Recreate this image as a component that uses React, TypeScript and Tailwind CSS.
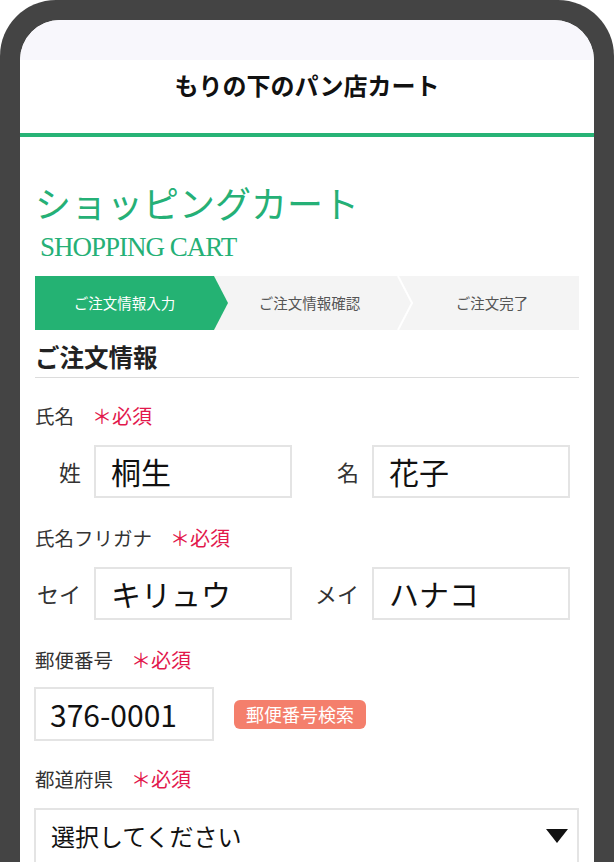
import React from "react";

const Required = () => (
  <span className="ml-[18px] text-[20px] text-[#e2184c]">＊必須</span>
);

const FieldLabel = ({ children }: { children: React.ReactNode }) => (
  <div className="flex h-[28px] items-center text-[19.5px] leading-[28px] text-[#333]">
    {children}
    <Required />
  </div>
);

const TextBox = ({ value }: { value: string }) => (
  <div className="flex h-[53px] items-center border-2 border-[#e4e4e4] pl-[15px] text-[30px] text-[#111]">
    {value}
  </div>
);

const NameRow = ({
  first,
  firstValue,
  second,
  secondValue,
}: {
  first: string;
  firstValue: string;
  second: string;
  secondValue: string;
}) => (
  <div className="mt-[15px] grid grid-cols-[59px_198px_80px_198px] items-center">
    <span className="pr-[13px] text-right text-[22px] text-[#333]">{first}</span>
    <TextBox value={firstValue} />
    <span className="pr-[13px] text-right text-[22px] text-[#333]">{second}</span>
    <TextBox value={secondValue} />
  </div>
);

export default function App() {
  return (
    <div className="h-[862px] w-[614px] overflow-hidden bg-white font-['Noto_Sans_CJK_JP','Noto_Sans',sans-serif]">
      {/* phone frame */}
      <div className="h-full rounded-t-[56px] bg-[#444] px-[20px] pt-[20px]">
        <div className="h-full overflow-hidden rounded-t-[40px] bg-white">
          {/* status strip */}
          <div className="h-[40px] bg-[#f8f7fc]" />

          {/* header */}
          <div className="h-[77px] border-b-4 border-[#27b376] pt-[11px] text-center text-[24px] font-bold leading-[28px] text-[#111]">
            もりの下のパン店カート
          </div>

          <div className="px-[15px] pt-[41px]">
            <h1 className="text-[36px] leading-[48px] font-normal text-[#25b076]">
              ショッピングカート
            </h1>
            <p className="mt-[6px] pl-[5px] font-['Liberation_Serif',serif] text-[27px] leading-[30px] tracking-[-1px] text-[#25b076]">
              SHOPPING CART
            </p>

            {/* steps */}
            <div className="mt-[14px] flex h-[54px] bg-[#f4f4f4] text-[14.5px]">
              <div className="relative flex w-[179px] items-center justify-center bg-[#24b273] text-white">
                ご注文情報入力
                <svg
                  className="absolute left-full top-0 h-[54px] w-[14px]"
                  viewBox="0 0 14 54"
                >
                  <polygon points="0,0 14,27 0,54" fill="#24b273" />
                </svg>
              </div>
              <div className="flex w-[191px] items-center justify-center text-[#555]">
                ご注文情報確認
              </div>
              <div className="relative flex flex-1 items-center justify-center text-[#555]">
                <svg
                  className="absolute left-[-8px] top-0 h-[54px] w-[18px]"
                  viewBox="0 0 18 54"
                >
                  <polyline
                    points="1,0 15,27 1,54"
                    fill="none"
                    stroke="#fff"
                    strokeWidth="2"
                  />
                </svg>
                ご注文完了
              </div>
            </div>

            {/* section title */}
            <h2 className="mt-[11px] border-b border-[#dcdcdc] pb-[4px] text-[24.5px] font-bold leading-[32px] text-[#222]">
              ご注文情報
            </h2>

            <div className="mt-[24px]">
              <FieldLabel>氏名</FieldLabel>
              <NameRow first="姓" firstValue="桐生" second="名" secondValue="花子" />
            </div>

            <div className="mt-[26px]">
              <FieldLabel>氏名フリガナ</FieldLabel>
              <NameRow
                first="セイ"
                firstValue="キリュウ"
                second="メイ"
                secondValue="ハナコ"
              />
            </div>

            <div className="mt-[26px]">
              <FieldLabel>郵便番号</FieldLabel>
              <div className="mt-[13px] flex items-center">
                <div className="ml-[-1px] flex h-[54px] w-[180px] items-center border-2 border-[#e4e4e4] pl-[14px] text-[30px] text-[#111]">
                  376-0001
                </div>
                <button className="ml-[20px] h-[29px] rounded-[6px] bg-[#f47f6c] px-[12px] text-[18px] leading-[29px] text-white">
                  郵便番号検索
                </button>
              </div>
            </div>

            <div className="mt-[24px]">
              <FieldLabel>都道府県</FieldLabel>
              <div className="mt-[15px] ml-[-1px] flex h-[56px] items-center justify-between border-2 border-[#e4e4e4] pl-[15px] pr-[9px] text-[24px] text-[#111]">
                選択してください
                <svg className="h-[14px] w-[22px]" viewBox="0 0 22 14">
                  <polygon points="0,0 22,0 11,14" fill="#111" />
                </svg>
              </div>
            </div>
          </div>
        </div>
      </div>
    </div>
  );
}
